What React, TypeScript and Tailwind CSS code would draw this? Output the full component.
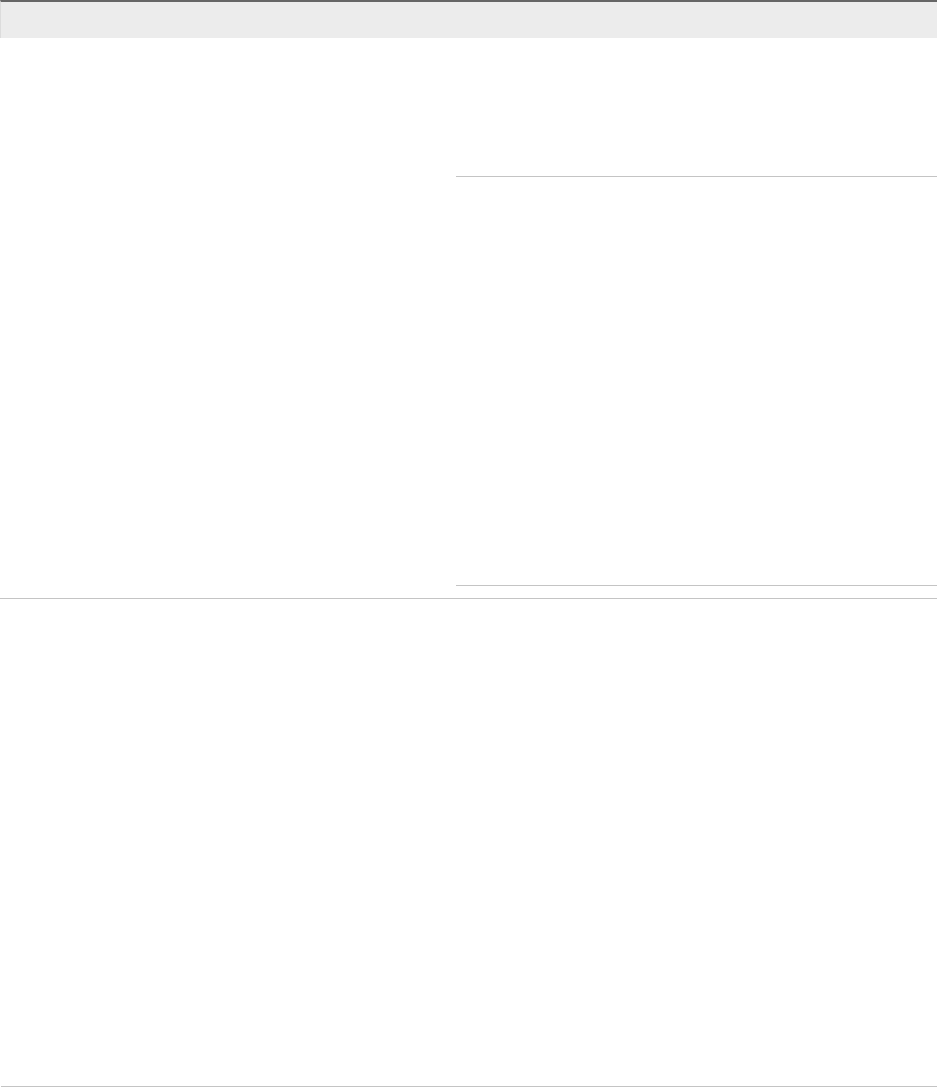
export default function App() {
  return (
    <div className="w-full bg-white font-['Liberation_Sans',sans-serif]">
      {/* table header */}
      <div className="h-[38px] border-t-2 border-[#666666] bg-[#ececec] border-l border-l-[#dcdcdc]" />

      {/* row 1 */}
      <div className="grid grid-cols-[456px_1fr] border-b border-[#c4c4c4]">
        <div />
        <div className="flex flex-col">
          <div className="h-[139px] border-b border-[#c4c4c4]" />
          <div className="h-[409px] border-b border-[#c4c4c4]" />
          <div className="h-[12px]" />
        </div>
      </div>

      {/* row 2 */}
      <div className="ml-px h-[488px] border-b border-[#c4c4c4]" />
    </div>
  );
}
